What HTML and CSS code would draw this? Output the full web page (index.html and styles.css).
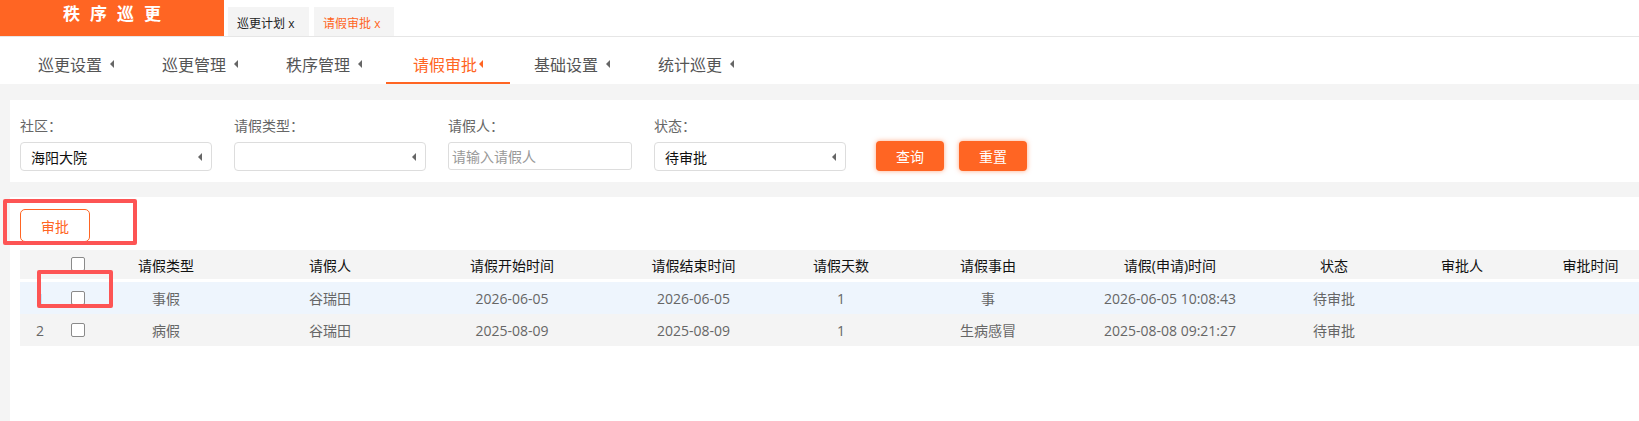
FILE: index.html
```html
<!DOCTYPE html>
<html lang="zh-CN">
<head>
    <meta charset="UTF-8">
    <meta name="viewport" content="width=device-width, initial-scale=1.0">
    <title>请假审批</title>
    <link rel="stylesheet" href="styles.css">
</head>
<body>
    <div class="page">
        <div class="topbar">
            <div class="logo">秩序巡更</div>
            <div class="tabs">
                <div class="tab">巡更计划 <span class="close">x</span></div>
                <div class="tab active">请假审批 <span class="close">x</span></div>
            </div>
        </div>

        <div class="nav">
            <div class="nav-item">巡更设置<i class="arrow"></i></div>
            <div class="nav-item">巡更管理<i class="arrow"></i></div>
            <div class="nav-item">秩序管理<i class="arrow"></i></div>
            <div class="nav-item active">请假审批<i class="arrow"></i></div>
            <div class="nav-item">基础设置<i class="arrow"></i></div>
            <div class="nav-item">统计巡更<i class="arrow"></i></div>
        </div>

        <div class="main">
            <div class="filter">
                <div class="field">
                    <label>社区<span class="colon">：</span></label>
                    <div class="select">海阳大院<i class="arrow"></i></div>
                </div>
                <div class="field">
                    <label>请假类型<span class="colon">：</span></label>
                    <div class="select"><i class="arrow"></i></div>
                </div>
                <div class="field narrow">
                    <label>请假人<span class="colon">：</span></label>
                    <input class="input" type="text" placeholder="请输入请假人">
                </div>
                <div class="field">
                    <label>状态<span class="colon">：</span></label>
                    <div class="select">待审批<i class="arrow"></i></div>
                </div>
                <div class="actions">
                    <button class="btn">查询</button>
                    <button class="btn">重置</button>
                </div>
            </div>

            <div class="content">
                <button class="btn-outline">审批</button>
                <table class="grid">
                    <colgroup>
                        <col style="width:40px"><col style="width:35px"><col style="width:142px">
                        <col style="width:186px"><col style="width:178px"><col style="width:185px">
                        <col style="width:110px"><col style="width:184px"><col style="width:180px">
                        <col style="width:148px"><col style="width:108px"><col style="width:149px">
                    </colgroup>
                    <thead>
                        <tr>
                            <th></th>
                            <th><span class="check"></span></th>
                            <th>请假类型</th>
                            <th>请假人</th>
                            <th>请假开始时间</th>
                            <th>请假结束时间</th>
                            <th>请假天数</th>
                            <th>请假事由</th>
                            <th>请假(申请)时间</th>
                            <th>状态</th>
                            <th>审批人</th>
                            <th>审批时间</th>
                        </tr>
                    </thead>
                    <tbody>
                        <tr class="hover">
                            <td>1</td>
                            <td><span class="check"></span></td>
                            <td>事假</td>
                            <td>谷瑞田</td>
                            <td>2026-06-05</td>
                            <td>2026-06-05</td>
                            <td>1</td>
                            <td>事</td>
                            <td>2026-06-05 10:08:43</td>
                            <td>待审批</td>
                            <td></td>
                            <td></td>
                        </tr>
                        <tr class="even">
                            <td>2</td>
                            <td><span class="check"></span></td>
                            <td>病假</td>
                            <td>谷瑞田</td>
                            <td>2025-08-09</td>
                            <td>2025-08-09</td>
                            <td>1</td>
                            <td>生病感冒</td>
                            <td>2025-08-08 09:21:27</td>
                            <td>待审批</td>
                            <td></td>
                            <td></td>
                        </tr>
                    </tbody>
                </table>
            </div>
        </div>

        <!-- highlight marks -->
        <div class="mark mark-approve"></div>
        <div class="mark mark-check"></div>
    </div>
</body>
</html>
```

FILE: styles.css
```css
html, body {
    margin: 0;
    height: 100%;
    overflow: hidden;
}

body {
    background-color: #fff;
    font-family: "Open Sans", "Noto Sans CJK SC", sans-serif;
    font-size: 14px;
    color: #333;
}

.page {
    position: relative;
    min-height: 100vh;
    display: flex;
    flex-direction: column;
}

/* top bar */
.topbar {
    display: flex;
    height: 36px;
    border-bottom: 1px solid #e6e6e6;
}

.logo {
    width: 224px;
    height: 36px;
    background-color: #ff6523;
    color: #fff;
    font-family: "Noto Sans CJK SC", sans-serif;
    font-size: 17px;
    font-weight: bold;
    letter-spacing: 10px;
    line-height: 25px;
    text-align: center;
    padding-left: 10px;
    box-sizing: border-box;
}

.tabs {
    display: flex;
    align-items: flex-end;
    gap: 5px;
    padding-left: 4px;
}

.tab {
    width: 81px;
    height: 29px;
    box-sizing: border-box;
    padding: 8px 0 0 9px;
    line-height: 18px;
    font-size: 12px;
    color: #222;
    background-color: #f4f4f4;
}

.tab.active {
    width: 80px;
    color: #ff6523;
}

/* menu */
.nav {
    display: flex;
    height: 47px;
    padding-left: 14px;
}

.nav-item {
    width: 124px;
    height: 47px;
    box-sizing: border-box;
    display: flex;
    justify-content: center;
    align-items: center;
    padding-top: 7px;
    gap: 8px;
    font-size: 16px;
    color: #555;
}

.nav-item.active {
    color: #ff6523;
    gap: 2px;
    border-bottom: 2px solid #ff6523;
    padding-top: 9px;
}

.arrow {
    display: inline-block;
    width: 0;
    height: 0;
    border-top: 4px solid transparent;
    border-bottom: 4px solid transparent;
    border-right: 4px solid #666;
}

.nav-item.active .arrow {
    border-right-color: #ff6523;
}

/* main area */
.main {
    flex: 1;
    background-color: #f4f4f4;
    padding: 16px 0 0 10px;
    display: flex;
    flex-direction: column;
    gap: 15px;
}

.filter {
    display: flex;
    gap: 22px;
    background-color: #fff;
    padding: 15px 0 11px 10px;
}

.field {
    display: flex;
    flex-direction: column;
    gap: 6px;
    width: 192px;
}

.field.narrow {
    width: 184px;
}

.field label {
    line-height: 20px;
    color: #666;
}

.colon {
    font-family: "Noto Sans CJK TC", sans-serif;
}

.select {
    height: 29px;
    box-sizing: border-box;
    border: 1px solid #ddd;
    border-radius: 4px;
    display: flex;
    align-items: center;
    justify-content: space-between;
    padding: 0 9px 0 10px;
    color: #111;
}

.select .arrow {
    margin-left: auto;
}

.input {
    height: 28px;
    box-sizing: border-box;
    border: 1px solid #ddd;
    border-radius: 3px;
    padding: 0 3px;
    font-family: inherit;
    font-size: 14px;
    outline: none;
}

.input::placeholder {
    color: #999;
}

.actions {
    display: flex;
    gap: 15px;
    align-self: flex-end;
    margin-left: 8px;
}

.btn {
    width: 68px;
    height: 30px;
    border: none;
    border-radius: 4px;
    background-color: #ff6523;
    color: #fff;
    font-family: inherit;
    font-size: 14px;
    box-shadow: 0 0 5px rgba(255, 101, 35, 0.55);
    cursor: pointer;
}

/* list */
.content {
    flex: 1;
    background-color: #fff;
    padding: 12px 0 0 10px;
    overflow: hidden;
}

.btn-outline {
    display: block;
    width: 70px;
    height: 33px;
    border: 1px solid #ff6523;
    border-radius: 5px;
    background: #fff;
    color: #ff6523;
    font-family: inherit;
    font-size: 14px;
    margin-bottom: 8px;
}

.grid {
    border-collapse: collapse;
    table-layout: fixed;
    width: 1645px;
}

.grid th {
    height: 29px;
    padding: 0;
    font-weight: normal;
    color: #111;
    background-color: #f4f4f4;
    border-bottom: 3px solid #fff;
}

.grid td {
    height: 32px;
    padding: 0;
    text-align: center;
    color: #666;
}

.grid tr.hover td {
    background-color: #eef5fd;
}

.grid tr.even td {
    background-color: #f4f4f4;
}

.check {
    display: block;
    width: 12px;
    height: 12px;
    margin: 0 auto;
    border: 1px solid #8a8a8a;
    border-radius: 2px;
    background: #fff;
}

.grid th .check {
    margin-top: -2px;
}

/* red highlight marks laid over the page */
.mark {
    position: absolute;
    border: 4px solid #fd5454;
    border-radius: 2px;
    box-sizing: border-box;
}

.mark-approve {
    left: 3px;
    top: 199px;
    width: 134px;
    height: 46px;
}

.mark-check {
    left: 37px;
    top: 270px;
    width: 76px;
    height: 38px;
}
```
